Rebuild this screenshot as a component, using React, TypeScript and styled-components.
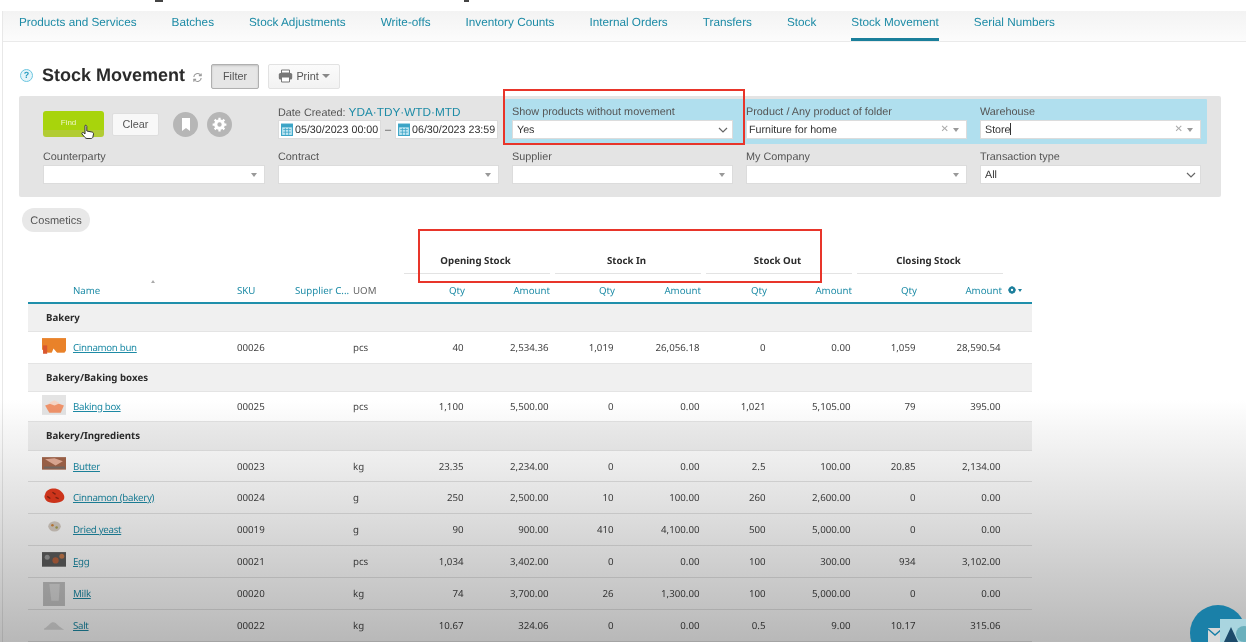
import React from "react";
import styled, { createGlobalStyle } from "styled-components";

const Global = createGlobalStyle`
  html, body { margin: 0; padding: 0; background: #fff; }
  body { width: 1246px; height: 642px; overflow: hidden; position: relative; font-family: "Liberation Sans", Arial, sans-serif; color: #333; text-rendering: geometricPrecision; }
`;
const teal = "#1d8ba6";
const Page = styled.div`
  width: 1246px; height: 642px; overflow: hidden; position: relative; box-sizing: border-box; padding-top: 11px;
  background: #fff; filter: blur(.35px);
  &::before { content: ""; position: absolute; left: 2px; top: 11px; bottom: 0; width: 1px; background: #e8e8e8; }
`;
const Nav = styled.nav`
  height: 31px; box-sizing: border-box; display: flex; padding-left: 17px; gap: 35px;
  background: linear-gradient(#f3f3f3, #fcfcfc); border-bottom: 1px solid #eaeaea; margin-left: 2px;
`;
const NavItem = styled.a<{ $on?: boolean }>`
  height: 30px; box-sizing: border-box; padding-top: 4px; font-size: 11.75px; line-height: 15px; color: ${teal};
  border-bottom: ${p => (p.$on ? `3px solid #1a7f9b` : "0")};
`;
const TitleRow = styled.div`
  display: flex; align-items: center; height: 24px; margin: 22px 0 8px 19px;
`;
const Help = styled.span`
  width: 11px; height: 11px; border: 1.5px solid #6cc6e0; border-radius: 50%; background: #e4f5fa; color: #2a9cc0; font-size: 9px; font-weight: bold; line-height: 11px; text-align: center; margin: -2px 9px 0 1px;
`;
const Title = styled.h1`
  margin: -2px 7px 0 0; font-size: 18px; font-weight: bold; color: #2b2b2b; line-height: 24px;
`;
const ToolButton = styled.button<{ $pressed?: boolean; $w: number }>`
  width: ${p => p.$w}px; height: 25px; box-sizing: border-box; display: inline-flex; align-items: center; justify-content: center; gap: 3px; padding: 0; font: 10.85px "Liberation Sans", sans-serif; color: #555;
  border-radius: 2px; border: 1px solid ${p => (p.$pressed ? "#b0b0b0" : "#e2e2e2")};
  background: ${p => (p.$pressed ? "#e6e6e6" : "linear-gradient(#fbfbfb,#f2f2f2)")};
  box-shadow: ${p => (p.$pressed ? "inset 0 1px 2px rgba(0,0,0,.15)" : "none")};
  margin-right: 9px;
`;
const Caret = styled.span`
  width: 0; height: 0; border-left: 4px solid transparent; border-right: 4px solid transparent; border-top: 4px solid #888; display: inline-block;
`;
const Panel = styled.section`
  margin: 0 25px 0 19px; height: 101px; box-sizing: border-box; padding: 3px 20px 0 24px; background: #e4e4e4; border-radius: 2px;
  display: grid; grid-template-columns: 222px 221px repeat(3, 221px); column-gap: 13px; grid-template-rows: 45px 1fr;
`;
const Band = styled.div`
  grid-column: 3 / 6; margin: 0 -6px 0 -7px; padding: 0 6px 0 7px; background: #b0dfee; border-radius: 1px;
  display: grid; grid-template-columns: repeat(3, 221px); column-gap: 13px;
`;
const Field = styled.div`
  padding-top: 7px; min-width: 0;
`;
const Label = styled.div`
  font-size: 10.85px; line-height: 13px; color: #555; margin-bottom: 1px; white-space: nowrap; height: 13px;
`;
const DateLinks = styled.span`
  color: ${teal}; font-size: 11.8px; margin-left: 3px;
`;
const Input = styled.div<{ $pad?: number }>`
  height: 19px; box-sizing: border-box; background: #fff; border: 1px solid #dcdcdc; display: flex; align-items: center; padding: 0 4px 0 ${p => p.$pad ?? 4}px; font-size: 10.7px; color: #333; justify-content: space-between; white-space: nowrap;
`;
const Right = styled.span`
  display: inline-flex; align-items: center; gap: 4px; color: #aaa; font-size: 10px;
`;
const Caret2 = styled(Caret)`
  border-left-width: 3.5px; border-right-width: 3.5px; border-top-width: 4px; border-top-color: #999; margin-right: 3px;
`;
const Cursor = styled.span`
  display: inline-block; width: 1px; height: 12px; background: #333; vertical-align: -2px; margin-left: -1px;
`;
const Actions = styled.div`
  display: flex; align-items: center; padding-top: 12px; align-self: start;
`;
const Search = styled.button`
  width: 61px; height: 26px; border: 0; border-radius: 3px; position: relative; color: #eef6c8; font: 8px "Liberation Sans", sans-serif; padding: 0 10px 4px 0; margin-right: 8px;
  background: linear-gradient(#a8d40c 72%, #b2cc34 72%);
`;
const Hand = styled.svg`
  position: absolute; left: 38px; top: 13px;
`;
const Clear = styled.button`
  width: 47px; height: 23px; border: 1px solid #dedede; border-radius: 2px; background: #f8f8f8; font: 10.85px "Liberation Sans", sans-serif; color: #555; padding: 0; margin-right: 14px;
`;
const Round = styled.span`
  width: 25px; height: 25px; border-radius: 50%; background: #b6b6b6; display: inline-flex; align-items: center; justify-content: center; margin-right: 9px;
`;
const Dates = styled.div`
  display: flex; align-items: center; justify-content: space-between; color: #555; font-size: 11px; padding-right: 1px;
`;
const DateInput = styled(Input)`
  width: 103px; padding: 0 2px; justify-content: flex-start; gap: 2px; font-size: 10.7px;
  svg { flex: none; }
`;
const Pill = styled.div`
  margin: 11px 0 0 22px; width: 68px; height: 24px; box-sizing: border-box; padding-top: 1px; border-radius: 12px; background: #e8e8e8; text-align: center; font-size: 11px; line-height: 24px; color: #555;
`;
const cols = "209px 58px 58px 58px 54px 85px 65px 86px 66px 85px 65px 85px 30px";
const TableWrap = styled.div`
  margin: 0 0 0 28px; width: 1004px; font-family: "Noto Sans", "DejaVu Sans", sans-serif; font-size: 9.7px; color: #444;
`;
const GroupHead = styled.div`
  display: grid; grid-template-columns: 371px repeat(4, 146px); column-gap: 5px; height: 42px;
`;
const GroupCell = styled.div`
  align-self: end; height: 23px; text-align: center; font-weight: bold; font-size: 9.7px; line-height: 20px; color: #2b2b2b; border-bottom: 1px solid #e3e3e3; box-sizing: border-box; padding-right: 3px;
`;
const HeadRow = styled.div`
  display: grid; grid-template-columns: ${cols}; height: 30px; box-sizing: border-box; padding-top: 4px; align-items: center; border-bottom: 2px solid #1f8fab; position: relative; color: ${teal};
`;
const HeadCell = styled.div<{ $r?: boolean; $pad?: number; $gray?: boolean }>`
  text-align: ${p => (p.$r ? "right" : "left")}; padding-left: ${p => p.$pad ?? 0}px; white-space: nowrap; color: ${p => (p.$gray ? "#666" : teal)};
`;
const Sort = styled.span`
  position: absolute; left: 123px; top: 6px; width: 0; height: 0; border-left: 2.5px solid transparent; border-right: 2.5px solid transparent; border-bottom: 3px solid #aaa;
`;
const GearCell = styled.div`
  display: flex; align-items: center; gap: 2px; padding-left: 6px;
`;
const GroupRow = styled.div<{ $h?: number }>`
  height: ${p => p.$h ?? 28}px; background: #f0f0f0; border-bottom: 1px solid #e4e4e4; box-sizing: border-box; padding-left: 18px; font-weight: bold; line-height: ${p => (p.$h ?? 28) - 1}px; color: #2b2b2b;
`;
const Row = styled.div<{ $h: number }>`
  display: grid; grid-template-columns: ${cols}; height: ${p => p.$h}px; box-sizing: border-box; align-items: center; border-bottom: 1px solid #e4e4e4;
`;
const NameCell = styled.div`
  display: flex; align-items: center;
`;
const Thumb = styled.svg`
  width: 24px; height: 24px; margin: 0 7px 0 14px; flex: none; display: block;
`;
const ProductLink = styled.a`
  color: ${teal}; text-decoration: underline; white-space: nowrap; letter-spacing: -.3px;
`;
const Cell = styled.div<{ $r?: boolean }>`
  text-align: ${p => (p.$r ? "right" : "left")}; padding-right: ${p => (p.$r ? 1.5 : 0)}px; white-space: nowrap;
`;
const Annotation = styled.div<{ $l: number; $t: number; $w: number; $h: number }>`
  position: absolute; left: ${p => p.$l}px; top: ${p => p.$t}px; width: ${p => p.$w}px; height: ${p => p.$h}px; box-sizing: border-box; border: 2px solid #e8352a; pointer-events: none;
`;
const Vignette = styled.div`
  position: absolute; left: 0; right: 0; top: 400px; bottom: 0; pointer-events: none; mix-blend-mode: multiply;
  background: linear-gradient(#ffffff, #f6f6f6 12%, #e2e2e2 41%, #b8b8b8);
`;
const TopFragment = styled.div`
  position: absolute; left: 155px; top: 0; width: 8px; height: 1.5px; background: #444;
`;
const TopFragment2 = styled(TopFragment)`
  left: 464px; width: 5px;
`;
const Chat = styled.div`
  position: absolute; left: 1190px; top: 605px; width: 56px; height: 56px; border-radius: 50%; background: #1a80a8;
`;
const ChatArt = styled.svg`
  position: absolute; left: 1206px; top: 619px;
`;

const Calendar = () => (
  <svg width="12" height="13" viewBox="0 0 11 12">
    <rect x=".5" y="1" width="10" height="10.5" fill="#bfe6f2" stroke="#3ba4c6" />
    <rect x=".5" y="1" width="10" height="3" fill="#3ba4c6" />
    <path d="M2 6h7M2 8.500h7M4 4.500v6.500M7 4.500v6.500" stroke="#3ba4c6" strokeWidth=".7" />
  </svg>
);
const Chevron = () => (
  <svg width="10" height="6" viewBox="0 0 10 6"><path d="M1 1l4 4 4-4" fill="none" stroke="#666" strokeWidth="1.2" /></svg>
);
const Clearable = () => (
  <Right>
    <span>✕</span>
    <Caret2 />
  </Right>
);

type T = "bun" | "box" | "butter" | "cinn" | "yeast" | "egg" | "milk" | "salt";
const thumbs: Record<T, React.ReactNode> = {
  bun: (<><rect y="2" width="23" height="14" fill="#e9822a" /><path d="M0 13l5 3 4 1 2-5 5 6 5-1 2-3v9H0z" fill="#fff" /><path d="M1 9h4v8H1z" fill="#d9572f" /></>),
  box: (<><rect y="0" width="23" height="19" fill="#e4e4e4" /><path d="M3 10l9-3 9 3-3 7H7z" fill="#f0936a" /><path d="M6 8l6-3 5 3-5 2z" fill="#f6d5c5" /></>),
  butter: (<><rect y="3" width="23" height="12" fill="#a3654a" /><path d="M3 5l9-1 8 3-7 4z" fill="#e8b09a" /><path d="M2 12h20v2H2z" fill="#7a6f68" /></>),
  cinn: (<><path d="M3 8C4 2 13 1 17 4s6 7 3 10-14 3-16 0S2 10 3 8z" fill="#e63a1e" /><path d="M5 10l3 2M10 6l3 2M13 11l3 1" stroke="#8a2412" strokeWidth="1.300" /></>),
  yeast: (<><ellipse cx="12" cy="8" rx="6" ry="5" fill="#d8cfc6" /><circle cx="10" cy="7" r="1.200" fill="#d0863c" /><circle cx="14" cy="9" r="1.200" fill="#a8a04e" /></>),
  egg: (<><rect y="2" width="23" height="14" fill="#5c5c5c" /><circle cx="5" cy="7" r="2.400" fill="#999" /><circle cx="13" cy="10" r="3" fill="#b5623e" /><circle cx="19" cy="6" r="2.400" fill="#c47a4c" /></>),
  milk: (<><rect x="1" y="-3" width="21" height="26" fill="#c4c4c4" /><path d="M7 2h10l-1 16H9z" fill="#dadada" /></>),
  salt: (<path d="M2 14c3-1 5-5 8-6s5 3 8 5 3 2 3 2H2z" fill="#dcdcdc" />),
};
const Thumbnail = ({ kind }: { kind: T }) => <Thumb viewBox="0 0 23 23">{thumbs[kind]}</Thumb>;

type P = { t: T; n: string; s: string; u: string; v: string[]; h: number };
const Product = ({ t, n, s, u, v, h }: P) => (
  <Row $h={h}>
    <NameCell><Thumbnail kind={t} /><ProductLink>{n}</ProductLink></NameCell>
    <Cell>{s}</Cell>
    <Cell />
    <Cell>{u}</Cell>
    {v.map((x, i) => <Cell key={i} $r>{x}</Cell>)}
  </Row>
);

export default function App() {
  const tabs = ["Products and Services", "Batches", "Stock Adjustments", "Write-offs", "Inventory Counts", "Internal Orders", "Transfers", "Stock", "Stock Movement", "Serial Numbers"];
  const qa = ["Qty", "Amount"];
  return (
    <Page>
      <Global />
      <TopFragment /><TopFragment2 />
      <Nav>{tabs.map(t => <NavItem key={t} $on={t === "Stock Movement"}>{t}</NavItem>)}</Nav>
      <TitleRow>
        <Help>?</Help>
        <Title>Stock Movement</Title>
        <svg width="11" height="11" viewBox="0 0 24 24" fill="none" stroke="#999" strokeWidth="2.400" style={{ marginRight: 8, marginTop: 3 }}>
          <path d="M4 11a8 8 0 0 1 14-5l2 2M20 13a8 8 0 0 1-14 5l-2-2" /><path d="M20 3v5h-5M4 21v-5h5" />
        </svg>
        <ToolButton $pressed $w={48}>Filter</ToolButton>
        <ToolButton $w={72}>
          <svg width="15" height="14" viewBox="0 0 15 14"><path d="M3.500 1h8v3h-8z" fill="#fff" stroke="#777" /><rect x=".8" y="4" width="13.400" height="6.500" rx="1.500" fill="#777" /><path d="M3.500 8h8v5h-8z" fill="#fff" stroke="#777" /></svg>
          Print <Caret />
        </ToolButton>
      </TitleRow>
      <Panel>
        <Actions>
          <Search>
            Find
            <Hand width="14" height="16" viewBox="0 0 14 16">
              <path d="M4 1.500c1-.6 1.800 0 1.800 1V7l5 1c1.300.3 1.800 1 1.700 2l-.6 3c-.2 1-1 1.500-2 1.500H6c-1 0-1.500-.5-2-1L1 10c-.6-1 .5-2 1.500-1.300L4 10z" fill="#fff" stroke="#333" strokeWidth="1" />
            </Hand>
          </Search>
          <Clear>Clear</Clear>
          <Round>
            <svg width="10" height="13" viewBox="0 0 10 13"><path d="M1 0h8v13L5 10l-4 3z" fill="#fff" /></svg>
          </Round>
          <Round>
            <svg width="15" height="15" viewBox="0 0 24 24" fill="#fff"><circle cx="12" cy="12" r="6" fill="none" stroke="#fff" strokeWidth="5" /><path d="M12 1v5M12 18v5M1 12h5M18 12h5M4.200 4.200l3.500 3.500M16.300 16.300l3.500 3.500M19.800 4.200l-3.500 3.500M7.700 16.300l-3.500 3.500" stroke="#fff" strokeWidth="3.600" /></svg>
          </Round>
        </Actions>
        <Field>
          <Label>Date Created:<DateLinks>YDA·TDY·WTD·MTD</DateLinks></Label>
          <Dates>
            <DateInput><Calendar />05/30/2023 00:00</DateInput>
            –
            <DateInput><Calendar />06/30/2023 23:59</DateInput>
          </Dates>
        </Field>
        <Band>
          <Field>
            <Label>Show products without movement</Label>
            <Input>Yes<Chevron /></Input>
          </Field>
          <Field>
            <Label>Product / Any product of folder</Label>
            <Input $pad={2}>Furniture for home<Clearable /></Input>
          </Field>
          <Field>
            <Label>Warehouse</Label>
            <Input><span>Store<Cursor /></span><Clearable /></Input>
          </Field>
        </Band>
        <Field><Label>Counterparty</Label><Input><span /><Caret2 /></Input></Field>
        <Field><Label>Contract</Label><Input><span /><Caret2 /></Input></Field>
        <Field><Label>Supplier</Label><Input><span /><Caret2 /></Input></Field>
        <Field><Label>My Company</Label><Input><span /><Caret2 /></Input></Field>
        <Field><Label>Transaction type</Label><Input>All<Chevron /></Input></Field>
      </Panel>
      <Pill>Cosmetics</Pill>
      <TableWrap>
        <GroupHead>
          <span />
          <GroupCell>Opening Stock</GroupCell>
          <GroupCell>Stock In</GroupCell>
          <GroupCell>Stock Out</GroupCell>
          <GroupCell>Closing Stock</GroupCell>
        </GroupHead>
        <HeadRow>
          <HeadCell $pad={45}>Name</HeadCell>
          <HeadCell>SKU</HeadCell>
          <HeadCell>Supplier C...</HeadCell>
          <HeadCell $gray>UOM</HeadCell>
          {[0, 1, 2, 3].flatMap(i => qa.map(q => <HeadCell key={i + q} $r>{q}</HeadCell>))}
          <GearCell>
            <svg width="8" height="8" viewBox="0 0 24 24"><circle cx="12" cy="12" r="7" fill="none" stroke="#1d7f9c" strokeWidth="7" /><path d="M12 1v4M12 19v4M1 12h4M19 12h4" stroke="#1d7f9c" strokeWidth="4" /></svg>
            <Caret style={{ borderLeftWidth: 2.5, borderRightWidth: 2.5, borderTopWidth: 3, borderTopColor: "#1d7f9c" }} />
          </GearCell>
          <Sort />
        </HeadRow>
        <GroupRow>Bakery</GroupRow>
        <Product h={32} t="bun" n="Cinnamon bun" s="00026" u="pcs" v={["40", "2,534.36", "1,019", "26,056.18", "0", "0.00", "1,059", "28,590.54"]} />
        <GroupRow>Bakery/Baking boxes</GroupRow>
        <Product h={30} t="box" n="Baking box" s="00025" u="pcs" v={["1,100", "5,500.00", "0", "0.00", "1,021", "5,105.00", "79", "395.00"]} />
        <GroupRow $h={29}>Bakery/Ingredients</GroupRow>
        <Product h={31} t="butter" n="Butter" s="00023" u="kg" v={["23.35", "2,234.00", "0", "0.00", "2.5", "100.00", "20.85", "2,134.00"]} />
        <Product h={32} t="cinn" n="Cinnamon (bakery)" s="00024" u="g" v={["250", "2,500.00", "10", "100.00", "260", "2,600.00", "0", "0.00"]} />
        <Product h={32} t="yeast" n="Dried yeast" s="00019" u="g" v={["90", "900.00", "410", "4,100.00", "500", "5,000.00", "0", "0.00"]} />
        <Product h={32} t="egg" n="Egg" s="00021" u="pcs" v={["1,034", "3,402.00", "0", "0.00", "100", "300.00", "934", "3,102.00"]} />
        <Product h={32} t="milk" n="Milk" s="00020" u="kg" v={["74", "3,700.00", "26", "1,300.00", "100", "5,000.00", "0", "0.00"]} />
        <Product h={32} t="salt" n="Salt" s="00022" u="kg" v={["10.67", "324.06", "0", "0.00", "0.5", "9.00", "10.17", "315.06"]} />
      </TableWrap>
      <Annotation $l={503} $t={89} $w={242} $h={56} />
      <Annotation $l={418} $t={229} $w={404} $h={54} />
      <Vignette />
      <Chat />
      <ChatArt width="40" height="23" viewBox="0 0 40 23">
        <rect x="2" y="9" width="14" height="14" fill="#d8d8d8" />
        <path d="M2 10l7 6 7-6" fill="none" stroke="#1a80a8" strokeWidth="1.500" />
        <rect x="14" y="0" width="26" height="23" fill="#a9d5df" />
        <path d="M18 23l7-15 7 15z" fill="#1c4a6a" />
        <circle cx="38" cy="15" r="8" fill="#6ab0bd" />
      </ChatArt>
    </Page>
  );
}
